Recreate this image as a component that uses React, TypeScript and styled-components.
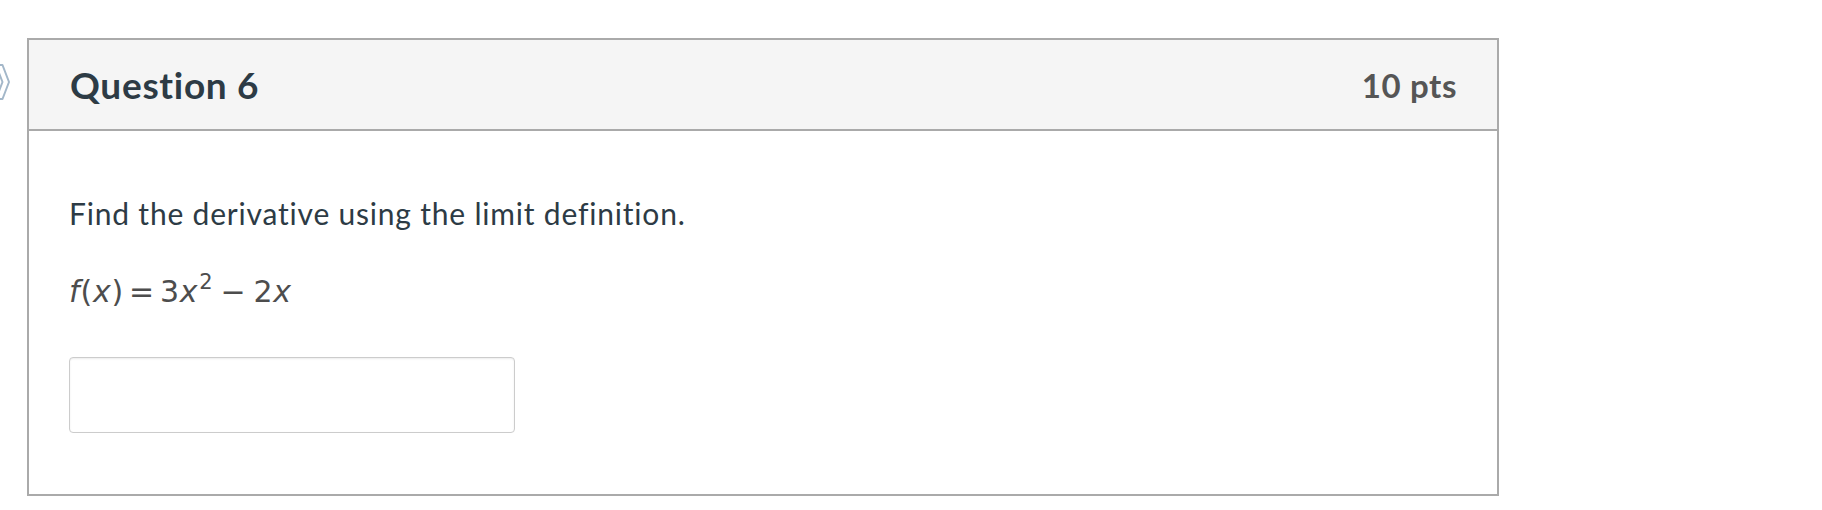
import React from "react";
import styled, { createGlobalStyle } from "styled-components";

const GlobalStyle = createGlobalStyle`
  html, body {
    margin: 0;
    padding: 0;
    background: #ffffff;
  }

  body {
    font-family: Lato, "Liberation Sans", sans-serif;
    color: #2d3b45;
    -webkit-font-smoothing: antialiased;
  }
`;

const Page = styled.div`
  display: flex;
  align-items: flex-start;
  padding-top: 38px;
  width: 1822px;
  height: 510px;
  box-sizing: border-box;
`;

const Gutter = styled.div`
  width: 27px;
  flex: none;
  display: flex;
  padding-top: 26px;
`;

const Card = styled.section`
  width: 1472px;
  border: 2px solid #aaaaaa;
  box-sizing: border-box;
  background: #ffffff;
`;

const Header = styled.header`
  height: 91px;
  box-sizing: border-box;
  display: flex;
  align-items: center;
  justify-content: space-between;
  padding: 0 40px 0 41px;
  background: #f5f5f5;
  border-bottom: 2px solid #aaaaaa;
`;

const Title = styled.h2`
  margin: 0;
  font-size: 37px;
  font-weight: 700;
  color: #2d3b45;
  letter-spacing: 0.7px;
`;

const Points = styled.span`
  font-size: 33px;
  font-weight: 700;
  color: #555555;
  letter-spacing: 0.6px;
`;

const Body = styled.div`
  padding: 61px 40px 61px 40px;
`;

const Prompt = styled.p`
  margin: 0;
  font-size: 30px;
  line-height: 42px;
  color: #2d3b45;
  letter-spacing: 0.8px;
`;

const Formula = styled.div`
  margin-top: 38px;
  font-family: "DejaVu Sans", Verdana, sans-serif;
  font-size: 30px;
  line-height: 40px;
  letter-spacing: 0.8px;
  color: #4d4d4d;
  display: flex;
  align-items: baseline;
`;

const Var = styled.i`
  font-style: italic;
`;

const Op = styled.span<{ $gap: number }>`
  margin: 0 ${(p) => p.$gap}px;
`;

const Sup = styled.span`
  font-size: 21px;
  line-height: 0;
  position: relative;
  top: -13px;
  margin-left: 1px;
`;

const AnswerInput = styled.input`
  display: block;
  margin-top: 45px;
  width: 446px;
  height: 76px;
  box-sizing: border-box;
  border: 1px solid #cccccc;
  border-radius: 4px;
  box-shadow: inset 0 1px 2px rgba(0, 0, 0, 0.08);
  font-family: Lato, sans-serif;
  font-size: 24px;
  padding: 0 12px;
  outline: none;
`;

function Marker() {
  return (
    <svg width="10" height="36" viewBox="0 0 10 36">
      <path
        d="M-4 1 L2.5 1 L9 18 L2.5 35 L-4 35 L2.5 18 Z"
        fill="none"
        stroke="#a3b7c9"
        strokeWidth="2"
        strokeLinejoin="round"
      />
    </svg>
  );
}

export default function App() {
  return (
    <>
      <GlobalStyle />
      <Page>
        <Gutter>
          <Marker />
        </Gutter>
        <Card>
          <Header>
            <Title>Question 6</Title>
            <Points>10 pts</Points>
          </Header>
          <Body>
            <Prompt>Find the derivative using the limit definition.</Prompt>
            <Formula>
              <Var>f</Var>(<Var>x</Var>)<Op $gap={5}>=</Op>3<Var>x</Var>
              <Sup>2</Sup>
              <Op $gap={7}>−</Op>2<Var>x</Var>
            </Formula>
            <AnswerInput type="text" aria-label="answer" />
          </Body>
        </Card>
      </Page>
    </>
  );
}
